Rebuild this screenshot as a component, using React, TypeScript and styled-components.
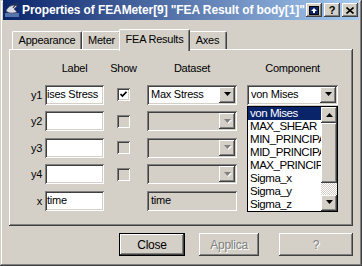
import styled, { createGlobalStyle, css } from "styled-components";

const face = "#d4d0c8";
const light = "#ffffff";
const shadow = "#808080";
const dark = "#404040";

const GlobalStyle = createGlobalStyle`
  html, body { margin: 0; padding: 0; background: ${face}; }
  body {
    font-family: "Liberation Sans", Arial, sans-serif;
    font-size: 11px;
    letter-spacing: -0.25px;
    color: #000;
  }
`;

const raised = css`
  box-shadow: inset -1px -1px ${dark}, inset 1px 1px ${light}, inset -2px -2px ${shadow}, inset 2px 2px ${face};
`;

const sunken = css`
  box-shadow: inset 1px 1px ${shadow}, inset -1px -1px ${light}, inset 2px 2px ${dark}, inset -2px -2px ${face};
`;

const Window = styled.div`
  width: 362px;
  height: 266px;
  box-sizing: border-box;
  padding: 0 3px 3px;
  background: ${face};
  box-shadow: inset -1px -1px ${dark}, inset 1px 1px ${face}, inset -2px -2px ${shadow}, inset 2px 2px ${light};
  display: flex;
  flex-direction: column;
`;

const TitleBar = styled.div`
  height: 20px;
  display: flex;
  align-items: center;
  padding: 0 1px 0 1px;
  background: linear-gradient(to right, #0a246a, #a6caf0);
  color: #fff;
`;

const TitleText = styled.div`
  flex: 1;
  margin-left: 2px;
  font-weight: bold;
  font-size: 12px;
  letter-spacing: -0.1px;
  white-space: nowrap;
  overflow: hidden;
`;

const CaptionButtons = styled.div`
  display: flex;
  gap: 2px;
`;

const CaptionButton = styled.div`
  width: 16px;
  height: 14px;
  background: ${face};
  ${raised};
  display: flex;
  align-items: center;
  justify-content: center;
  color: #000;
  font-weight: bold;
  font-size: 11px;
  letter-spacing: 0;
`;

const Body = styled.div`
  flex: 1;
  display: flex;
  flex-direction: column;
  padding: 9px 6px 0;
`;

const TabRow = styled.div`
  display: flex;
  align-items: flex-end;
  height: 20px;
  padding-left: 3px;
`;

const Tab = styled.div<{ $active?: boolean; $w: number }>`
  width: ${(p) => p.$w}px;
  box-sizing: border-box;
  height: ${(p) => (p.$active ? 22 : 18)}px;
  margin: ${(p) => (p.$active ? "0 -2px -2px" : "0")};
  position: relative;
  z-index: ${(p) => (p.$active ? 1 : 0)};
  background: ${face};
  border-top: 1px solid ${light};
  border-left: 1px solid ${light};
  border-right: 1px solid ${dark};
  border-radius: 2px 2px 0 0;
  box-shadow: inset -1px 0 ${shadow};
  display: flex;
  justify-content: center;
  padding-top: ${(p) => (p.$active ? 3 : 2)}px;
  font-size: 11px;
`;

const Panel = styled.div`
  height: 177px;
  box-sizing: border-box;
  ${raised};
  padding: 13px 0 0 1px;
`;

const Grid = styled.div`
  display: grid;
  grid-template-columns: 35px 59px 43px 90px 101px;
  grid-template-rows: 16px repeat(5, 20px);
  row-gap: 6.5px;
  align-items: center;
`;

const Header = styled.div<{ $shift?: number }>`
  align-self: start;
  text-align: center;
  padding-left: ${(p) => p.$shift ?? 0}px;
  line-height: 13px;
`;

const RowLabel = styled.div`
  text-align: right;
  padding-right: 3px;
`;

const TextBox = styled.div`
  height: 20px;
  box-sizing: border-box;
  background: #fff;
  ${sunken};
  padding: 3px 2px 0 2px;
  white-space: nowrap;
  overflow: hidden;
`;

const CheckCell = styled.div`
  display: flex;
  justify-content: center;
  padding-right: 4px;
`;

const Check = styled.div<{ $enabled?: boolean }>`
  width: 13px;
  height: 13px;
  box-sizing: border-box;
  background: ${(p) => (p.$enabled ? "#fff" : face)};
  ${sunken};
  display: flex;
  align-items: center;
  justify-content: center;
`;

const ComboCell = styled.div<{ $pad?: number }>`
  position: relative;
  padding-left: ${(p) => p.$pad ?? 0}px;
`;

const Combo = styled.div<{ $disabled?: boolean }>`
  height: 20px;
  box-sizing: border-box;
  background: ${(p) => (p.$disabled ? face : "#fff")};
  ${sunken};
  padding: 2px;
  display: flex;
  align-items: stretch;
`;

const ComboText = styled.div`
  flex: 1;
  padding: 1px 0 0 2px;
  white-space: nowrap;
  overflow: hidden;
`;

const ArrowButton = styled.div<{ $h?: number }>`
  width: 16px;
  height: ${(p) => p.$h ?? 16}px;
  box-sizing: border-box;
  background: ${face};
  ${raised};
  display: flex;
  align-items: center;
  justify-content: center;
  flex-shrink: 0;
`;

const DropList = styled.div`
  position: absolute;
  top: calc(100% + 1px);
  left: 10px;
  width: 91px;
  height: 106px;
  box-sizing: border-box;
  border: 1px solid #000;
  background: #fff;
  display: flex;
  z-index: 5;
`;

const Items = styled.div`
  flex: 1;
  min-width: 0;
  overflow: hidden;
`;

const Item = styled.div<{ $selected?: boolean }>`
  height: 13px;
  line-height: 13px;
  padding-left: 2px;
  white-space: nowrap;
  overflow: hidden;
  font-size: 11.5px;
  letter-spacing: -0.45px;
  background: ${(p) => (p.$selected ? "#0a246a" : "transparent")};
  color: ${(p) => (p.$selected ? "#fff" : "#000")};
`;

const ScrollBar = styled.div`
  width: 16px;
  display: flex;
  flex-direction: column;
`;

const Thumb = styled.div`
  height: 60px;
  background: ${face};
  ${raised};
`;

const Track = styled.div`
  flex: 1;
  background: repeating-conic-gradient(${face} 0 25%, #fff 0 50%) 0 0 / 2px 2px;
`;

const ButtonRow = styled.div`
  display: flex;
  margin-top: 7px;
  padding-left: 110px;
`;

const PushButton = styled.div<{ $w: number; $ml?: number; $default?: boolean; $disabled?: boolean }>`
  width: ${(p) => p.$w}px;
  height: 23px;
  margin-left: ${(p) => p.$ml ?? 0}px;
  box-sizing: border-box;
  background: ${face};
  ${(p) =>
    p.$default
      ? css`
          box-shadow: inset 0 0 0 1px #000, inset -2px -2px ${dark}, inset 2px 2px ${light}, inset -3px -3px ${shadow};
        `
      : css`
          box-shadow: inset -1px -1px ${dark}, inset 1px 1px ${light}, inset -2px -2px ${shadow};
        `}
  display: flex;
  align-items: center;
  justify-content: center;
  font-size: 12px;
  color: ${(p) => (p.$disabled ? shadow : "#000")};
  text-shadow: ${(p) => (p.$disabled ? `1px 1px ${light}` : "none")};
`;

function DownArrow({ disabled }: { disabled?: boolean }) {
  return (
    <svg width="7" height="5" viewBox="0 0 7 5" style={{ overflow: "visible" }}>
      {disabled && <path d="M1 1h7l-3.5 4z" fill="#fff" />}
      <path d="M0 0h7l-3.5 4z" fill={disabled ? shadow : "#000"} />
    </svg>
  );
}

function UpArrow() {
  return (
    <svg width="7" height="4" viewBox="0 0 7 4">
      <path d="M0 4h7L3.5 0z" fill="#000" />
    </svg>
  );
}

function DishIcon() {
  return (
    <svg width="16" height="16" viewBox="0 0 16 16">
      <rect x="1" y="11" width="14" height="4" fill="#2a4a8a" />
      <path d="M1 12h14M1 14h14" stroke="#9bb6e0" strokeWidth="0.8" />
      <path d="M2 9c2-5 7-7 11-5l-3 3 3 3c-4 2-9 1-11-1z" fill="#d8dce8" stroke="#556" strokeWidth="0.8" />
      <path d="M9 6l3-4" stroke="#334" strokeWidth="1.2" />
      <circle cx="12.5" cy="2" r="1.2" fill="#334" />
    </svg>
  );
}

function RollUpGlyph() {
  return (
    <svg width="10" height="9" viewBox="0 0 10 9">
      <rect x="0.5" y="0.5" width="9" height="8" fill="#0a246a" stroke="#000" />
      <path d="M5 2l3 3H6v2H4V5H2z" fill="#fff" />
    </svg>
  );
}

function CloseGlyph() {
  return (
    <svg width="8" height="7" viewBox="0 0 8 7">
      <path d="M0.5 0.5l7 6M7.5 0.5l-7 6" stroke="#000" strokeWidth="1.6" />
    </svg>
  );
}

const checkmark = (
  <svg width="7" height="7" viewBox="0 0 7 7">
    <path d="M0.5 3l2 2 4-4.2" stroke="#000" strokeWidth="1.7" fill="none" />
  </svg>
);

const components = ["von Mises", "MAX_SHEAR", "MIN_PRINCIPAL", "MID_PRINCIPAL", "MAX_PRINCIPAL", "Sigma_x", "Sigma_y", "Sigma_z"];

const rows = [
  { name: "y1", label: "ises Stress", show: true, dataset: "Max Stress", component: "von Mises" },
  { name: "y2", label: "", show: false },
  { name: "y3", label: "", show: false },
  { name: "y4", label: "", show: false },
];

export default function App() {
  return (
    <>
      <GlobalStyle />
      <Window>
        <TitleBar>
          <DishIcon />
          <TitleText>Properties of FEAMeter[9] "FEA Result of body[1]"</TitleText>
          <CaptionButtons>
            <CaptionButton>
              <RollUpGlyph />
            </CaptionButton>
            <CaptionButton>?</CaptionButton>
            <CaptionButton>
              <CloseGlyph />
            </CaptionButton>
          </CaptionButtons>
        </TitleBar>
        <Body>
          <TabRow>
            <Tab $w={70}>Appearance</Tab>
            <Tab $w={39}>Meter</Tab>
            <Tab $w={71} $active>
              FEA Results
            </Tab>
            <Tab $w={39}>Axes</Tab>
          </TabRow>
          <Panel>
            <Grid>
              <div />
              <Header>Label</Header>
              <Header>
                <CheckCell>Show</CheckCell>
              </Header>
              <Header>Dataset</Header>
              <Header $shift={10}>Component</Header>

              {rows.map((r) => (
                <Row key={r.name} {...r} />
              ))}

              <RowLabel>x</RowLabel>
              <TextBox>time</TextBox>
              <div />
              <Combo $disabled>
                <ComboText>time</ComboText>
              </Combo>
              <div />
            </Grid>
          </Panel>
          <ButtonRow>
            <PushButton $w={67} $default>
              Close
            </PushButton>
            <PushButton $w={61} $ml={14} $disabled>
              Applica
            </PushButton>
            <PushButton $w={75} $ml={20} $disabled>
              ?
            </PushButton>
          </ButtonRow>
        </Body>
      </Window>
    </>
  );
}

function Row({ name, label, show, dataset, component }: { name: string; label: string; show: boolean; dataset?: string; component?: string }) {
  const enabled = !!dataset;
  return (
    <>
      <RowLabel>{name}</RowLabel>
      <TextBox>{label}</TextBox>
      <CheckCell>
        <Check $enabled={enabled}>{show && checkmark}</Check>
      </CheckCell>
      <Combo $disabled={!enabled}>
        <ComboText>{dataset}</ComboText>
        <ArrowButton>
          <DownArrow disabled={!enabled} />
        </ArrowButton>
      </Combo>
      {enabled ? (
        <ComboCell $pad={10}>
          <Combo>
            <ComboText>{component}</ComboText>
            <ArrowButton>
              <DownArrow />
            </ArrowButton>
          </Combo>
          <DropList>
            <Items>
              {components.map((c) => (
                <Item key={c} $selected={c === component}>
                  {c}
                </Item>
              ))}
            </Items>
            <ScrollBar>
              <ArrowButton>
                <UpArrow />
              </ArrowButton>
              <Thumb />
              <Track />
              <ArrowButton>
                <DownArrow />
              </ArrowButton>
            </ScrollBar>
          </DropList>
        </ComboCell>
      ) : (
        <div />
      )}
    </>
  );
}
